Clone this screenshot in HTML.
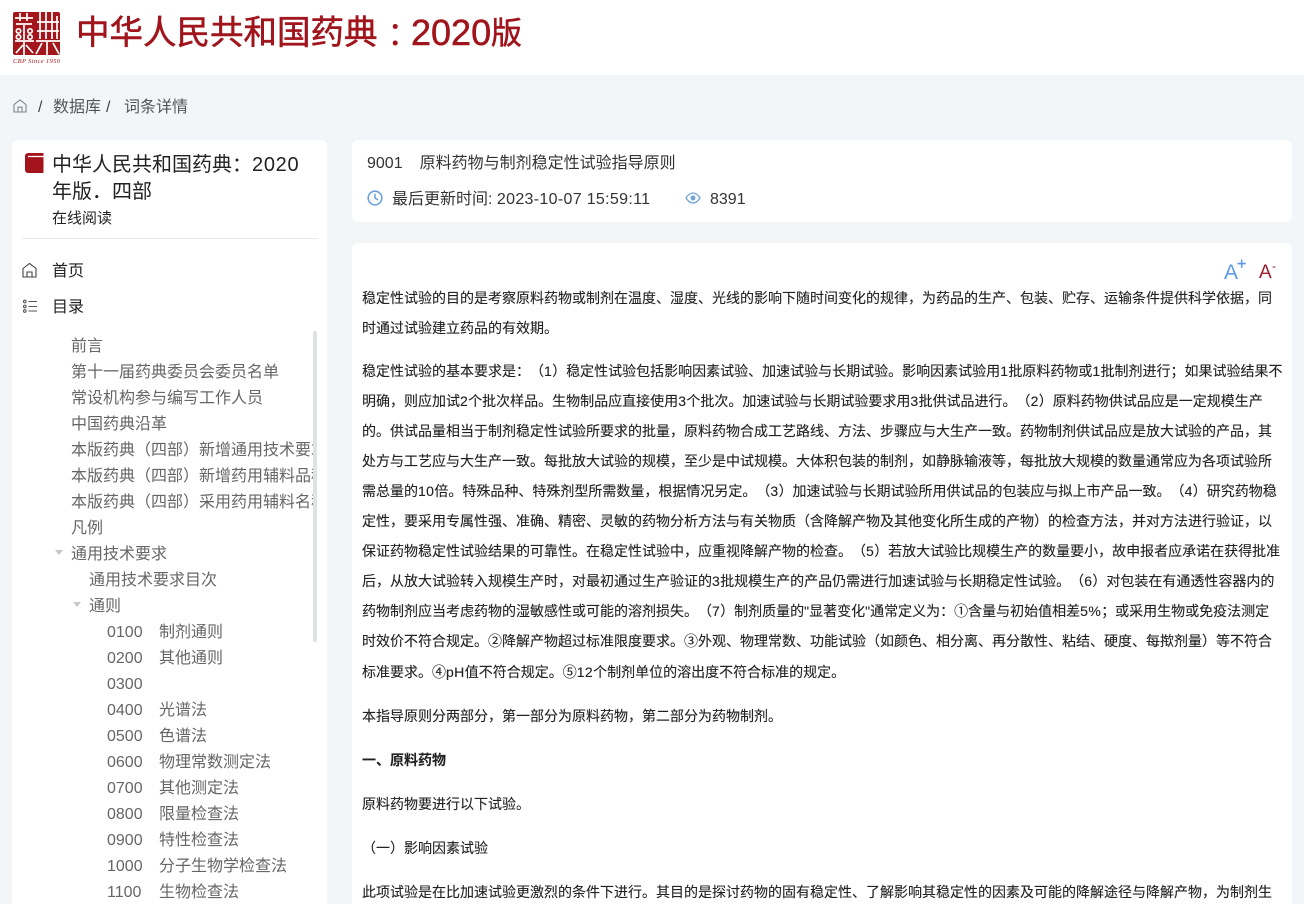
<!DOCTYPE html>
<html lang="zh"><head><meta charset="utf-8">
<style>
html,body{margin:0;padding:0;width:1304px;height:904px;overflow:hidden}
body{position:relative;background:#f3f6f8;font-family:"Liberation Sans","Noto Sans CJK SC",sans-serif;color:#333;text-spacing-trim:space-all;font-feature-settings:"palt" 0}
.a{position:absolute;white-space:nowrap}
.card{position:absolute;background:#fff;border-radius:6px 6px 0 0}
.l{position:absolute;left:362px;white-space:nowrap;font-size:14px;line-height:20px;color:#222;-webkit-text-stroke:.12px #222}
.l u{text-decoration:none;letter-spacing:.4px}
.t{position:absolute;white-space:nowrap;font-size:16px;line-height:24px;color:#666}
.tri{position:absolute;width:0;height:0;border-left:4.5px solid transparent;border-right:4.5px solid transparent;border-top:5px solid #c4c8cc}
</style></head><body>
<div class="a" style="left:0;top:0;width:1304px;height:75px;background:#fff"></div>
<svg class="a" style="left:12px;top:11px" width="50" height="54" viewBox="0 0 50 54">
<rect x="1" y="1" width="47" height="43" rx="2" fill="#a3171c"/>
<g stroke="#fff" stroke-width="1.700" fill="none">
<path d="M3 7h18M8 2v8M15 2v8M4 13h16M12 14v15M3 30h19M12 30v14M4 42l7-8M21 42l-7-8"/>
<circle cx="6.500" cy="20" r="2.200"/><circle cx="6.500" cy="26" r="2.200"/><circle cx="18" cy="20" r="2.200"/><circle cx="18" cy="26" r="2.200"/>
<path d="M28 1v27M34 1v27M40 1v27M45 5v23M25 11h22M25 20h22M24 30h24M30 32l-6 11M41 32l6 11M35 31v13"/>
</g>
<text x="1" y="52" font-family="Liberation Serif" font-style="italic" font-size="6.400" fill="#a3171c" textLength="47">CBP Since 1950</text>
</svg>
<div class="a" style="left:76px;top:11px;font-size:33.500px;line-height:46px;color:#a0141c;-webkit-text-stroke:.5px #a0141c">中华人民共和国药典</div>
<div class="a" style="left:387px;top:11px;font-size:33px;line-height:46px;color:#a0141c">：</div>
<div class="a" style="left:411px;top:10px;font-size:36px;line-height:46px;color:#a0141c;-webkit-text-stroke:.5px #a0141c">2020</div>
<div class="a" style="left:491px;top:11px;font-size:31px;line-height:46px;color:#a0141c;-webkit-text-stroke:.5px #a0141c">版</div>

<svg class="a" style="left:12px;top:98px" width="16" height="16" viewBox="0 0 16 16" fill="none" stroke="#7b8794" stroke-width="1.100"><path d="M2 6.600 8 2l6 4.600V14H2zM6 14V9.200h4V14"/></svg>
<div class="a" style="left:38px;top:96px;font-size:16px;line-height:24px;color:#444">/</div>
<div class="a" style="left:53px;top:96px;font-size:16px;line-height:24px;color:#555">数据库</div>
<div class="a" style="left:106px;top:96px;font-size:16px;line-height:24px;color:#444">/</div>
<div class="a" style="left:124px;top:96px;font-size:16px;line-height:24px;color:#555">词条详情</div>

<div class="card" style="left:12px;top:140px;width:315px;height:764px"></div>
<svg class="a" style="left:25px;top:153px" width="19" height="21" viewBox="0 0 19 21"><path d="M3 0h15.500v20H3a3 3 0 0 1-3-3V3a3 3 0 0 1 3-3z" fill="#a3141c"/><path d="M3 3.500h15.500" stroke="#fff" stroke-width="1.300"/></svg>
<div class="a" style="left:52px;top:152px;font-size:20px;line-height:27px;color:#222">中华人民共和国药典：<span style="letter-spacing:.7px">2020</span><br>年版．四部</div>
<div class="a" style="left:52px;top:208px;font-size:15px;line-height:22px;color:#222">在线阅读</div>
<div class="a" style="left:22px;top:238px;width:296px;height:1px;background:#e4e6e8"></div>
<svg class="a" style="left:21px;top:262px" width="17" height="17" viewBox="0 0 17 17" fill="none" stroke="#444" stroke-width="1.100"><path d="M2 6.500 8.500 1.500 15 6.500V15H2zM6 15v-5h5v5"/></svg>
<div class="a" style="left:52px;top:260px;font-size:16px;line-height:24px;color:#222">首页</div>
<svg class="a" style="left:22px;top:299px" width="16" height="15" viewBox="0 0 16 15" fill="none" stroke="#555" stroke-width="1.100"><circle cx="2.800" cy="2.500" r="1.300"/><circle cx="2.800" cy="7.500" r="1.300"/><circle cx="2.800" cy="12" r="1.300"/><path d="M6.500 2.500h8.500M6.500 7.500h8.500M6.500 12h8.500"/></svg>
<div class="a" style="left:52px;top:296px;font-size:16px;line-height:24px;color:#222">目录</div>

<div class="a" style="left:12px;top:331px;width:301px;height:573px;overflow:hidden">
<div class="t" style="left:59px;top:4px">前言</div>
<div class="t" style="left:59px;top:30px">第十一届药典委员会委员名单</div>
<div class="t" style="left:59px;top:56px">常设机构参与编写工作人员</div>
<div class="t" style="left:59px;top:82px">中国药典沿革</div>
<div class="t" style="left:59px;top:108px">本版药典（四部）新增通用技术要求</div>
<div class="t" style="left:59px;top:134px">本版药典（四部）新增药用辅料品种</div>
<div class="t" style="left:59px;top:160px">本版药典（四部）采用药用辅料名称</div>
<div class="t" style="left:59px;top:186px">凡例</div>
<div class="tri" style="left:43px;top:219px"></div>
<div class="t" style="left:59px;top:212px">通用技术要求</div>
<div class="t" style="left:77px;top:238px">通用技术要求目次</div>
<div class="tri" style="left:61px;top:271px"></div>
<div class="t" style="left:77px;top:264px">通则</div>
<div class="t" style="left:95px;top:290px">0100</div><div class="t" style="left:147px;top:290px">制剂通则</div>
<div class="t" style="left:95px;top:316px">0200</div><div class="t" style="left:147px;top:316px">其他通则</div>
<div class="t" style="left:95px;top:342px">0300</div>
<div class="t" style="left:95px;top:368px">0400</div><div class="t" style="left:147px;top:368px">光谱法</div>
<div class="t" style="left:95px;top:394px">0500</div><div class="t" style="left:147px;top:394px">色谱法</div>
<div class="t" style="left:95px;top:420px">0600</div><div class="t" style="left:147px;top:420px">物理常数测定法</div>
<div class="t" style="left:95px;top:446px">0700</div><div class="t" style="left:147px;top:446px">其他测定法</div>
<div class="t" style="left:95px;top:472px">0800</div><div class="t" style="left:147px;top:472px">限量检查法</div>
<div class="t" style="left:95px;top:498px">0900</div><div class="t" style="left:147px;top:498px">特性检查法</div>
<div class="t" style="left:95px;top:524px">1000</div><div class="t" style="left:147px;top:524px">分子生物学检查法</div>
<div class="t" style="left:95px;top:550px">1100</div><div class="t" style="left:147px;top:550px">生物检查法</div>
</div>
<div class="a" style="left:313px;top:331px;width:4px;height:311px;background:#e0e1e2;border-radius:2px"></div>

<div class="card" style="left:352px;top:140px;width:940px;height:82px;border-radius:6px"></div>
<div class="a" style="left:367px;top:152px;font-size:16px;line-height:24px;color:#333">9001<span style="margin-left:17px">原料药物与制剂稳定性试验指导原则</span></div>
<svg class="a" style="left:367px;top:190px" width="16" height="16" viewBox="0 0 16 16" fill="none" stroke="#6ea3dc" stroke-width="1.600"><circle cx="8" cy="8" r="6.800"/><path d="M8 3.800V8l3 2"/></svg>
<div class="a" style="left:392px;top:188px;font-size:16px;line-height:24px;color:#333">最后更新时间: <span style="letter-spacing:.32px">2023-10-07 15:59:11</span></div>
<svg class="a" style="left:685px;top:192px" width="16" height="12" viewBox="0 0 16 12" fill="none" stroke="#6ea3dc" stroke-width="1.300"><path d="M1 6c2-3.300 4.400-5 7-5s5 1.700 7 5c-2 3.300-4.400 5-7 5S3 9.300 1 6z"/><circle cx="8" cy="6" r="1.800" fill="#6ea3dc"/></svg>
<div class="a" style="left:710px;top:188px;font-size:16px;line-height:24px;color:#333">8391</div>

<div class="card" style="left:352px;top:243px;width:940px;height:661px"></div>
<div class="a" style="left:1224px;top:259px;font-size:21px;line-height:28px;color:#5b9be6">A</div>
<div class="a" style="left:1237px;top:255px;font-size:16px;line-height:20px;color:#5b9be6;-webkit-text-stroke:.4px #5b9be6">+</div>
<div class="a" style="left:1259px;top:261px;font-size:19px;line-height:24px;color:#9c1c2c">A</div>
<div class="a" style="left:1272px;top:258px;font-size:12px;line-height:16px;color:#9c1c2c">-</div>

<div class="l" style="top:288px">稳定性试验的目的是考察原料药物或制剂在温度、湿度、光线的影响下随时间变化的规律，为药品的生产、包装、贮存、运输条件提供科学依据，同</div>
<div class="l" style="top:318px">时通过试验建立药品的有效期。</div>
<div class="l" style="top:361px">稳定性试验的基本要求是：（<u>1</u>）稳定性试验包括影响因素试验、加速试验与长期试验。影响因素试验用<u>1</u>批原料药物或<u>1</u>批制剂进行；如果试验结果不</div>
<div class="l" style="top:391px">明确，则应加试<u>2</u>个批次样品。生物制品应直接使用<u>3</u>个批次。加速试验与长期试验要求用<u>3</u>批供试品进行。（<u>2</u>）原料药物供试品应是一定规模生产</div>
<div class="l" style="top:421px">的。供试品量相当于制剂稳定性试验所要求的批量，原料药物合成工艺路线、方法、步骤应与大生产一致。药物制剂供试品应是放大试验的产品，其</div>
<div class="l" style="top:451px">处方与工艺应与大生产一致。每批放大试验的规模，至少是中试规模。大体积包装的制剂，如静脉输液等，每批放大规模的数量通常应为各项试验所</div>
<div class="l" style="top:481px">需总量的<u>10</u>倍。特殊品种、特殊剂型所需数量，根据情况另定。（<u>3</u>）加速试验与长期试验所用供试品的包装应与拟上市产品一致。（<u>4</u>）研究药物稳</div>
<div class="l" style="top:511px">定性，要采用专属性强、准确、精密、灵敏的药物分析方法与有关物质（含降解产物及其他变化所生成的产物）的检查方法，并对方法进行验证，以</div>
<div class="l" style="top:541px">保证药物稳定性试验结果的可靠性。在稳定性试验中，应重视降解产物的检查。（<u>5</u>）若放大试验比规模生产的数量要小，故申报者应承诺在获得批准</div>
<div class="l" style="top:571px">后，从放大试验转入规模生产时，对最初通过生产验证的<u>3</u>批规模生产的产品仍需进行加速试验与长期稳定性试验。（<u>6</u>）对包装在有通透性容器内的</div>
<div class="l" style="top:601px">药物制剂应当考虑药物的湿敏感性或可能的溶剂损失。（<u>7</u>）制剂质量的"显著变化"通常定义为：①含量与初始值相差<u>5%</u>；或采用生物或免疫法测定</div>
<div class="l" style="top:631px">时效价不符合规定。②降解产物超过标准限度要求。③外观、物理常数、功能试验（如颜色、相分离、再分散性、粘结、硬度、每揿剂量）等不符合</div>
<div class="l" style="top:662px">标准要求。④<u>pH</u>值不符合规定。⑤<u>12</u>个制剂单位的溶出度不符合标准的规定。</div>
<div class="l" style="top:706px">本指导原则分两部分，第一部分为原料药物，第二部分为药物制剂。</div>
<div class="l" style="top:750px;font-weight:bold">一、原料药物</div>
<div class="l" style="top:794px">原料药物要进行以下试验。</div>
<div class="l" style="top:838px">（一）影响因素试验</div>
<div class="l" style="top:882px">此项试验是在比加速试验更激烈的条件下进行。其目的是探讨药物的固有稳定性、了解影响其稳定性的因素及可能的降解途径与降解产物，为制剂生</div>
</body></html>
